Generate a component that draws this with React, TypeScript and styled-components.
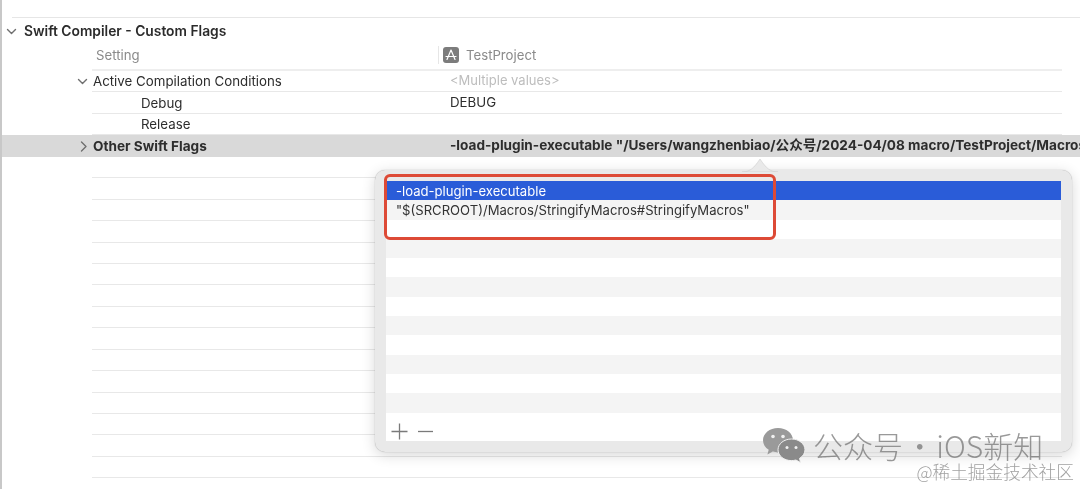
import React from "react"
import styled, { createGlobalStyle } from "styled-components"

const GlobalStyle = createGlobalStyle`
    html, body {
        margin: 0;
        padding: 0;
        background: #fff;
    }
    body {
        font-family: Inter, "Noto Sans CJK SC", sans-serif;
    }
`

const Page = styled.div`
    position: relative;
    box-sizing: border-box;
    width: 1080px;
    height: 489px;
    overflow: hidden;
    background: #fff;
    padding-top: 17px;
    filter: blur(0.5px);
`

const LeftEdge = styled.div`
    position: absolute;
    left: 0;
    top: 0;
    bottom: 0;
    width: 2px;
    background: #c8c8c8;
    z-index: 1;
`

const TopRule = styled.div`
    height: 1px;
    margin-left: 12px;
    background: #e6e6e6;
`

const SectionHeader = styled.div`
    display: flex;
    align-items: center;
    gap: 7px;
    height: 26px;
    padding-left: 6px;
    font-size: 13.8px;
    font-weight: 600;
    color: #2b2b2b;
`

const Chevron = styled.svg`
    flex: none;
    width: 11px;
    height: 11px;
    fill: none;
    stroke: #6f6f6f;
    stroke-width: 1.4;
`

const ColumnHeader = styled.div`
    display: grid;
    grid-template-columns: 342px 1fr;
    align-items: center;
    height: 27px;
    margin: 0 18px 0 92px;
    padding: 0 0 4px 4px;
    box-sizing: border-box;
    border-bottom: 2px solid #eeeeee;
    font-size: 13.2px;
    color: #8a8a8a;
`

const TargetCell = styled.div`
    display: flex;
    align-items: center;
    gap: 7px;
    height: 18px;
    padding-left: 4px;
    border-left: 1px solid #e6e6e6;
`

const AppIcon = styled.svg`
    flex: none;
    width: 16px;
    height: 16px;
`

const Rows = styled.div`
    display: flex;
    flex-direction: column;
`

const Row = styled.div<{ $selected?: boolean }>`
    position: relative;
    display: grid;
    grid-template-columns: 357px 1fr;
    align-items: center;
    flex: none;
    height: 21.45px;
    box-sizing: border-box;
    white-space: nowrap;
    line-height: 16px;
    font-size: ${(p) => (p.$selected ? 13.6 : 13.3)}px;
    color: #2d2d2d;
    font-weight: ${(p) => (p.$selected ? 700 : 400)};
    ${(p) =>
        p.$selected
            ? `
        background: #d9d9d9;
        padding: 0 0 1px 93px;
        overflow: hidden;
    `
            : `
        margin: 0 18px 0 92px;
        padding-left: 1px;
        border-bottom: 1px solid #e8e8e8;
    `}
`

const SettingName = styled.div<{ $indent?: boolean }>`
    display: flex;
    align-items: center;
    padding-left: ${(p) => (p.$indent ? 48 : 0)}px;
`

const RowChevron = styled(Chevron)`
    position: absolute;
    left: -15px;
`

const SelectedChevron = styled(Chevron)`
    position: absolute;
    left: 78px;
`

const Value = styled.div<{ $muted?: boolean }>`
    padding-bottom: 2px;
    color: ${(p) => (p.$muted ? "#bdbdbd" : "inherit")};
    font-size: ${(p) => (p.$muted ? "13px" : "inherit")};
`

const PopoverArrow = styled.svg`
    position: absolute;
    left: 742px;
    top: 157px;
    width: 36px;
    height: 15px;
    z-index: 3;
`

const Popover = styled.div`
    position: absolute;
    left: 375px;
    top: 170px;
    width: 697px;
    height: 282px;
    box-sizing: border-box;
    padding: 11px;
    border-radius: 10px;
    background: #e9e9e9;
    box-shadow: 0 0 1px rgba(0, 0, 0, 0.35), 0 3px 14px rgba(0, 0, 0, 0.16);
    z-index: 2;
`

const List = styled.div`
    display: flex;
    flex-direction: column;
    height: 260px;
    background: #fff;
`

const ListRow = styled.div<{ $active?: boolean; $striped?: boolean }>`
    flex: none;
    height: 19.3px;
    line-height: 20.5px;
    padding-left: 10px;
    font-size: 13.1px;
    white-space: nowrap;
    color: ${(p) => (p.$active ? "#fff" : "#333")};
    background: ${(p) =>
        p.$active ? "#2a5cd8" : p.$striped ? "#f4f4f4" : "#fff"};
`

const ListFooter = styled.div`
    flex: 1;
    display: flex;
    align-items: flex-end;
    gap: 9px;
    padding: 0 0 1px 5px;
`

const FooterIcon = styled.svg`
    width: 17px;
    height: 17px;
    stroke: #7a7a7a;
    stroke-width: 1.3;
    fill: none;
`

const Annotation = styled.div`
    position: absolute;
    left: 384px;
    top: 174px;
    width: 392px;
    height: 66px;
    box-sizing: border-box;
    border: 3px solid #dd4a36;
    border-radius: 6px;
    z-index: 4;
`

const Watermark = styled.div`
    position: absolute;
    left: 763px;
    top: 427px;
    display: flex;
    align-items: center;
    gap: 8px;
    z-index: 5;
    color: rgba(110, 110, 110, 0.7);
    font-size: 30px;
    line-height: 36px;
    word-spacing: -5px;
    font-family: "Noto Sans CJK SC", sans-serif;
    font-weight: 300;
    white-space: nowrap;
`

const WechatLogo = styled.svg`
    flex: none;
    width: 42px;
    height: 36px;
`

const Credit = styled.div`
    position: absolute;
    right: 6px;
    bottom: 7px;
    z-index: 5;
    font-family: "Noto Sans CJK SC", sans-serif;
    font-size: 17.7px;
    line-height: 22px;
    font-weight: 300;
    color: rgba(120, 120, 120, 0.7);
    white-space: nowrap;
`

const Down = () => (
    <polyline points="1.5,3.5 5.5,7.5 9.5,3.5" strokeLinecap="round" strokeLinejoin="round" />
)

const Right = () => (
    <polyline points="3.5,1 8,5.5 3.5,10" strokeLinecap="round" strokeLinejoin="round" />
)

const stripes = [false, true, false, true, false, true, false, true, false, true]

function App() {
    return (
        <Page>
            <GlobalStyle />
            <LeftEdge />
            <TopRule />
            <SectionHeader>
                <Chevron viewBox="0 0 11 11">
                    <Down />
                </Chevron>
                Swift Compiler - Custom Flags
            </SectionHeader>
            <ColumnHeader>
                <div>Setting</div>
                <TargetCell>
                    <AppIcon viewBox="0 0 16 16">
                        <rect width="16" height="16" rx="3" fill="#7c7c7c" />
                        <path
                            d="M8 3 L4 12.5 M8 3 L12 12.5 M3 9.5 H13"
                            stroke="#fff"
                            strokeWidth="1.2"
                            strokeLinecap="round"
                            fill="none"
                        />
                    </AppIcon>
                    TestProject
                </TargetCell>
            </ColumnHeader>
            <Rows>
                <Row>
                    <RowChevron viewBox="0 0 11 11">
                        <Down />
                    </RowChevron>
                    <SettingName>Active Compilation Conditions</SettingName>
                    <Value $muted>{"<Multiple values>"}</Value>
                </Row>
                <Row>
                    <SettingName $indent>Debug</SettingName>
                    <Value>DEBUG</Value>
                </Row>
                <Row>
                    <SettingName $indent>Release</SettingName>
                    <Value />
                </Row>
                <Row $selected>
                    <SelectedChevron viewBox="0 0 11 11">
                        <Right />
                    </SelectedChevron>
                    <SettingName>Other Swift Flags</SettingName>
                    <Value>
                        -load-plugin-executable "/Users/wangzhenbiao/公众号/2024-04/08 macro/TestProject/Macros
                    </Value>
                </Row>
                {Array.from({ length: 16 }, (_, i) => (
                    <Row key={i} />
                ))}
            </Rows>
            <PopoverArrow viewBox="0 0 36 15">
                <path d="M0 15 C8 15 12 11 18 2 C24 11 28 15 36 15 Z" fill="#e9e9e9" stroke="#d2d2d2" strokeWidth="0.7" />
            </PopoverArrow>
            <Popover>
                <List>
                    <ListRow $active>-load-plugin-executable</ListRow>
                    <ListRow $striped>"$(SRCROOT)/Macros/StringifyMacros#StringifyMacros"</ListRow>
                    {stripes.map((striped, i) => (
                        <ListRow key={i} $striped={striped} />
                    ))}
                    <ListFooter>
                        <FooterIcon viewBox="0 0 17 17">
                            <path d="M8.5 0.5 V16.5 M0.5 8.5 H16.5" />
                        </FooterIcon>
                        <FooterIcon viewBox="0 0 17 17">
                            <path d="M1 8.5 H16" />
                        </FooterIcon>
                    </ListFooter>
                </List>
            </Popover>
            <Annotation />
            <Watermark>
                <WechatLogo viewBox="0 0 42 36">
                    <path
                        d="M15 1 C6.7 1 0 6.5 0 13.3 C0 17.2 2.2 20.6 5.7 22.8 L4.4 27.5 L9.8 24.6 C11.4 25.1 13.2 25.4 15 25.4 C23.3 25.4 30 19.9 30 13.1 C30 6.5 23.3 1 15 1 Z"
                        fill="#9a9a9a"
                    />
                    <path
                        d="M28.5 12 C20.9 12 15 16.9 15 22.8 C15 28.8 20.9 33.6 28.5 33.6 C30 33.6 31.5 33.4 32.9 33 L37.6 35.6 L36.5 31.4 C39.9 29.4 42 26.3 42 22.8 C42 16.9 36 12 28.5 12 Z"
                        fill="#8a8a8a"
                        stroke="#f2f2f2"
                        strokeWidth="1"
                    />
                    <circle cx="10" cy="9.5" r="1.8" fill="#f0f0f0" />
                    <circle cx="20" cy="9.5" r="1.8" fill="#f0f0f0" />
                    <circle cx="24" cy="20.5" r="1.5" fill="#f0f0f0" />
                    <circle cx="33" cy="20.5" r="1.5" fill="#f0f0f0" />
                </WechatLogo>
                公众号 · iOS新知
            </Watermark>
            <Credit>@稀土掘金技术社区</Credit>
        </Page>
    )
}

export default App
